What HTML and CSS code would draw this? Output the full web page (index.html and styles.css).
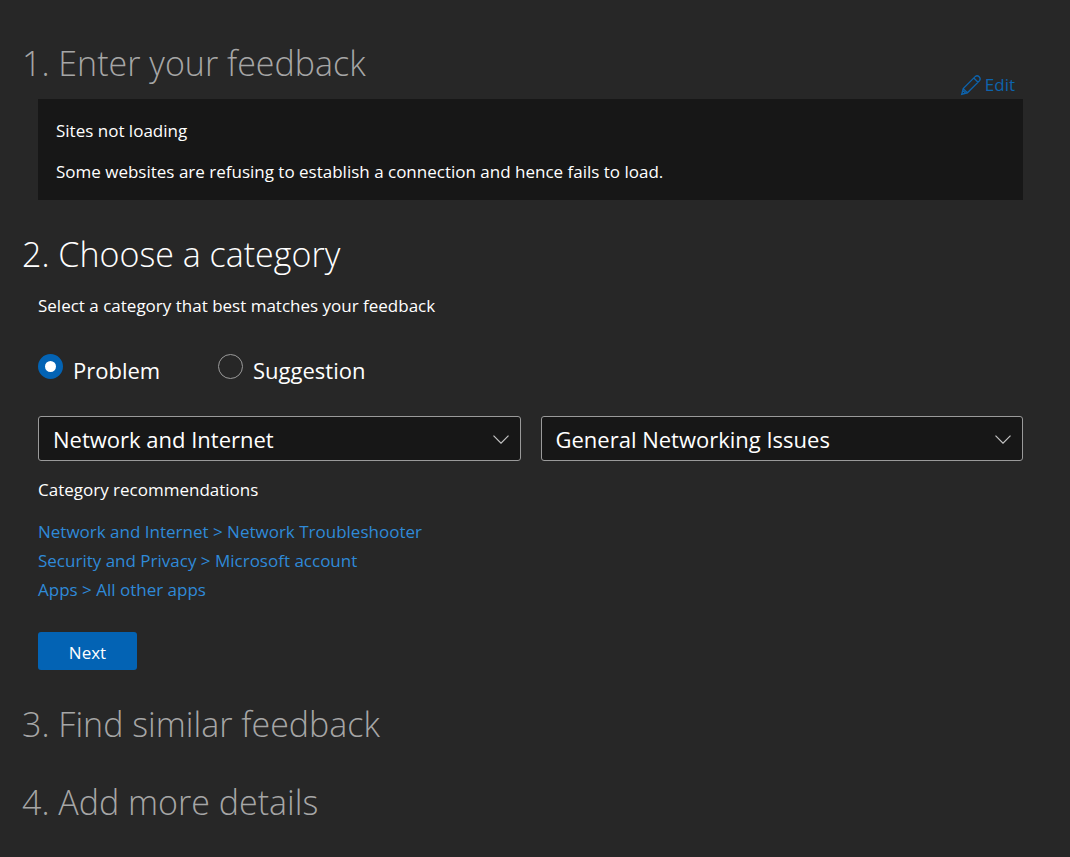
FILE: index.html
```html
<!DOCTYPE html>
<html lang="en">
<head>
  <meta charset="UTF-8">
  <meta name="viewport" content="width=device-width, initial-scale=1.0">
  <title>Feedback</title>
  <link rel="stylesheet" href="styles.css">
</head>
<body>
  <form class="feedback">
    <section class="step">
      <div class="step-header">
        <h2 class="step-title inactive">1. Enter your feedback</h2>
        <a class="edit" href="#edit">
          <svg class="edit-icon" viewBox="0 0 20 20" width="20" height="20" aria-hidden="true">
            <path d="M.7 19.3 2.2 13.6 14.4 1.4Q16.2-.1 18.1 1.8 20 3.7 18.6 5.6L6.4 17.8ZM2.2 13.6 6.4 17.8M12.8 3 17 7.2M.8 19.2l1-3.8 2.8 2.8z"/>
          </svg>
          <span>Edit</span>
        </a>
      </div>
      <div class="summary">
        <p>Sites not loading</p>
        <p>Some websites are refusing to establish a connection and hence fails to load.</p>
      </div>
    </section>

    <section class="step">
      <h2 class="step-title">2. Choose a category</h2>
      <div class="step-body">
        <p class="hint">Select a category that best matches your feedback</p>
        <div class="types">
          <label class="type"><input type="radio" name="type" value="problem" checked><span>Problem</span></label>
          <label class="type"><input type="radio" name="type" value="suggestion"><span>Suggestion</span></label>
        </div>
        <div class="categories">
          <div class="dropdown">
            <select id="category" aria-label="Category">
              <option>Network and Internet</option>
              <option>Security and Privacy</option>
              <option>Apps</option>
            </select>
            <svg class="chevron" viewBox="0 0 16 9" width="16" height="9" aria-hidden="true"><path d="M.5 .7 8 8.200 15.500 .7"/></svg>
          </div>
          <div class="dropdown">
            <select id="subcategory" aria-label="Subcategory">
              <option>General Networking Issues</option>
              <option>Network Troubleshooter</option>
            </select>
            <svg class="chevron" viewBox="0 0 16 9" width="16" height="9" aria-hidden="true"><path d="M.5 .7 8 8.200 15.500 .7"/></svg>
          </div>
        </div>
        <p class="recommend-title">Category recommendations</p>
        <ul class="recommendations">
          <li><a href="#network">Network and Internet &gt; Network Troubleshooter</a></li>
          <li><a href="#security">Security and Privacy &gt; Microsoft account</a></li>
          <li><a href="#apps">Apps &gt; All other apps</a></li>
        </ul>
        <button class="next" type="button">Next</button>
      </div>
    </section>

    <section class="step">
      <h2 class="step-title inactive">3. Find similar feedback</h2>
    </section>

    <section class="step">
      <h2 class="step-title inactive">4. Add more details</h2>
    </section>
  </form>
</body>
</html>
```

FILE: styles.css
```css
* {
  box-sizing: border-box;
}
body {
  margin: 0;
  background-color: #272727;
  color: #fff;
  font-family: "Segoe UI", "Open Sans", sans-serif;
  font-size: 17px;
  line-height: 24px;
}
p, h2, ul {
  margin: 0;
  padding: 0;
}
a {
  color: #2f8ad8;
  text-decoration: none;
}
.feedback {
  display: flex;
  flex-direction: column;
  gap: 30px;
  padding: 39px 47px 24px 22px;
}
.step-header {
  display: flex;
  justify-content: space-between;
  height: 60px;
}
.step-title {
  font-size: 34px;
  font-weight: 300;
  line-height: 48px;
}
.inactive {
  color: #a6a6a6;
}
.edit {
  display: flex;
  align-items: center;
  align-self: flex-end;
  gap: 4px;
  padding: 0 8px 2px 0;
  color: #0d63ad;
}
.edit-icon {
  fill: none;
  stroke: currentColor;
  stroke-width: 1.3;
  overflow: visible;
}
.summary {
  display: flex;
  flex-direction: column;
  gap: 17px;
  margin-left: 16px;
  padding: 20px 18px 16px;
  background-color: #171717;
}
.step-body {
  margin-left: 16px;
}
.hint {
  padding-top: 16px;
}
.types {
  display: flex;
  padding: 34px 0 28px;
}
.type {
  display: flex;
  gap: 10px;
  width: 180px;
  font-size: 22px;
  line-height: 36px;
}
.type input {
  appearance: none;
  width: 25px;
  height: 25px;
  margin: 2px 0 0;
  border: 1px solid #9a9a9a;
  border-radius: 50%;
}
.type input:checked {
  border: 7px solid #0363b4;
  background-color: #fff;
}
.categories {
  display: grid;
  grid-template-columns: 1fr 1fr;
  gap: 20px;
}
.dropdown {
  position: relative;
}
.dropdown select {
  appearance: none;
  display: block;
  width: 100%;
  height: 45px;
  padding: 0 40px 0 14px;
  border: 1px solid #9a9a9a;
  border-radius: 3px;
  background-color: #171717;
  color: #fff;
  font-family: inherit;
  font-size: 22px;
}
.chevron {
  position: absolute;
  top: 19px;
  right: 12px;
  fill: none;
  stroke: #c4c4c4;
  stroke-width: 1.2;
  pointer-events: none;
}
.recommend-title {
  padding: 17px 0 15px;
}
.recommendations {
  list-style: none;
  line-height: 29px;
}
.next {
  display: block;
  width: 99px;
  height: 38px;
  margin: 28px 0 0;
  padding: 2px 0 0;
  border: none;
  border-radius: 3px;
  background-color: #0363b4;
  color: #fff;
  font-family: inherit;
  font-size: 17px;
  cursor: pointer;
}
```
